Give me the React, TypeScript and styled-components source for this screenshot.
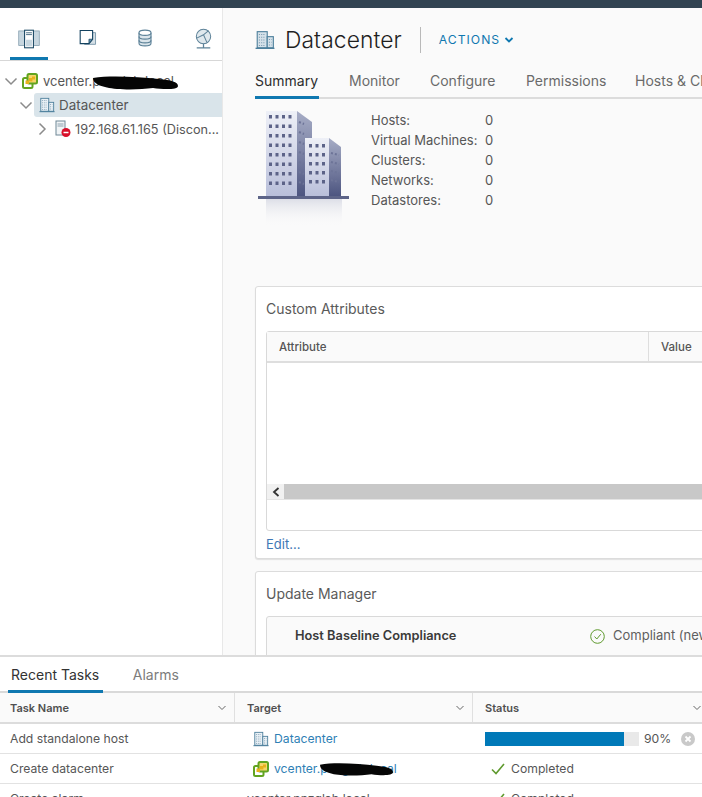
import React from "react";
import styled, { createGlobalStyle } from "styled-components";

const Global = createGlobalStyle`
  html, body { margin: 0; padding: 0; background: #fff; }
  body { font-family: Inter, "Noto Sans", "Liberation Sans", sans-serif; color: #565656; }
  * { box-sizing: border-box; }
`;

const Page = styled.div`
  width: 702px; height: 797px; display: flex; flex-direction: column; overflow: hidden;
`;
const TopBar = styled.div`height: 8px; flex: none; background: #314351;`;
const Middle = styled.div`height: 647px; flex: none; display: flex; overflow: hidden;`;
const Sidebar = styled.aside`
  width: 223px; flex: none; background: #fff; border-right: 1px solid #e8e8e8; padding-top: 16px;
`;
const SideTabs = styled.div`
  display: flex; height: 37px; border-bottom: 1px solid #d7d7d7; padding-left: 10px; gap: 20px;
`;
const SideTab = styled.div<{ $active?: boolean }>`
  width: 38px; height: 36px; display: flex; align-items: flex-start; justify-content: center; padding-top: 4px;
  border-bottom: ${p => (p.$active ? "3px solid #0f78b0" : "none")};
`;
const Tree = styled.div`padding-top: 8px; display: flex; flex-direction: column;`;
const TreeRow = styled.div<{ $indent: number }>`
  height: 24px; display: flex; align-items: center; position: relative; white-space: nowrap;
  font-size: 13px; color: #565656; margin-left: ${p => p.$indent}px;
`;
const TreeLabel = styled.div<{ $selected?: boolean; $pad: number; $size: number }>`
  flex: 1; height: 24px; display: flex; align-items: center; min-width: 0;
  font-size: ${p => p.$size}px; padding-left: ${p => p.$pad}px;
  background: ${p => (p.$selected ? "#d9e4ea" : "transparent")};
  border-radius: ${p => (p.$selected ? "3px 0 0 3px" : "0")};
`;
const TreeIconText = styled.span<{ $gap: number }>`margin-left: ${p => p.$gap}px;`;
const Twisty = styled.span`
  width: 16px; flex: none; display: flex; align-items: center; justify-content: center; color: #8b8b8b;
`;
const Scribble = styled.svg`position: absolute; pointer-events: none;`;

const Main = styled.main`
  flex: 1; min-width: 0; background: #fafafa; padding: 17px 0 0 32px; overflow: hidden;
`;
const Head = styled.div`display: flex; align-items: center; height: 30px; width: 500px;`;
const Title = styled.h1`
  margin: 0 0 0 10px; font-size: 22.800px; line-height: 30px; font-weight: 300; color: #1f1f1f; letter-spacing: 0.1px;
`;
const Sep = styled.div`width: 1px; height: 26px; background: #b9b9b9; margin: 0 18px 0 18px;`;
const Actions = styled.div`
  font-size: 12.2px; letter-spacing: 1px; color: #0f78b0; display: flex; align-items: center; gap: 4px; margin-top: -1px;
`;
const Tabs = styled.div`
  display: flex; height: 38px; margin-top: 6px; width: 560px; border-bottom: 2px solid #dcdcdc; white-space: nowrap;
`;
const Tab = styled.div<{ $active?: boolean; $w: number }>`
  width: ${p => p.$w}px; flex: none; height: 38px; padding-top: 11px; font-size: 14px; line-height: 18px;
  color: ${p => (p.$active ? "#2d2d2d" : "#6a6a6a")};
`;
const ActiveTab = styled(Tab)`
  border-bottom: 3px solid #0f78b0; margin-right: 30px;
`;
const Summary = styled.div`display: flex; height: 187px; padding-top: 10px;`;
const Art = styled.div`width: 116px; flex: none; padding-left: 3px;`;
const Stats = styled.div`display: flex; flex-direction: column; padding-top: 1px;`;
const Stat = styled.div`
  display: flex; height: 20px; align-items: center; font-size: 13px; color: #565656;
`;
const StatLabel = styled.span`width: 114px; flex: none;`;

const Card = styled.section`
  width: 560px; background: #fff; border: 1px solid #dcdcdc; border-radius: 3px; padding: 0 10px;
  box-shadow: 0 1px 1px #e0e0e0;
`;
const AttrCard = styled(Card)`height: 273px; margin-bottom: 12px;`;
const CardTitle = styled.h2`
  margin: 0; font-size: 14px; font-weight: 400; line-height: 18px; padding-top: 13px; height: 44px; color: #5a5a5a;
`;
const AttrTable = styled.div`
  height: 200px; border: 1px solid #d9d9d9; border-radius: 3px; display: flex; flex-direction: column;
`;
const AttrHead = styled.div`
  height: 31px; flex: none; background: #fafafa; border-bottom: 2px solid #dedede; display: flex;
`;
const AttrCell = styled.div<{ $w: number }>`
  width: ${p => p.$w}px; flex: none; font-size: 11.5px; font-weight: 500; color: #555; padding-left: 12px;
  display: flex; align-items: center; border-right: 1px solid #dedede;
`;
const AttrBody = styled.div`height: 121px; flex: none;`;
const Scrollbar = styled.div`
  height: 16px; flex: none; display: flex; background: #c8c8c8; border-bottom: 1px solid #e4e4e4;
`;
const ScrollBtn = styled.div`
  width: 17px; background: #f1f1f1; display: flex; align-items: center; justify-content: center; color: #333;
`;
const EditLink = styled.a`
  display: block; font-size: 13px; color: #3f78b5; padding-top: 5px; line-height: 16px;
`;
const ComplianceBox = styled.div`
  height: 60px; border: 1px solid #d9d9d9; border-radius: 3px 3px 0 0; background: #fafafa;
  display: flex; padding-top: 9px; font-size: 13px; white-space: nowrap;
`;
const ComplianceTitle = styled.div`
  width: 323px; flex: none; padding-left: 28px; margin-top: 1px; font-size: 12.800px; font-weight: 600; color: #3a3a3a; line-height: 18px;
`;
const ComplianceState = styled.div`
  display: flex; align-items: flex-start; gap: 8px; line-height: 18px; color: #5f5f5f;
`;

const Bottom = styled.footer`
  flex: 1; background: #fff; border-top: 2px solid #dcdcdc; position: relative; z-index: 1; overflow: hidden;
`;
const BottomTabs = styled.div`
  height: 36px; display: flex; padding-left: 8px; gap: 27px; border-bottom: 2px solid #d9d9d9;
`;
const BottomTab = styled.div<{ $active?: boolean }>`
  height: 36px; padding: 9px 3.500px 0 3px; font-size: 14px; line-height: 18px; white-space: nowrap;
  color: ${p => (p.$active ? "#333" : "#7c7c7c")};
  border-bottom: ${p => (p.$active ? "3px solid #0f78b0" : "none")};
`;
const GridRow = styled.div<{ $head?: boolean }>`
  display: grid; grid-template-columns: 235px 238px 229px; height: ${p => (p.$head ? "31px" : "30px")};
  background: ${p => (p.$head ? "#fafafa" : "#fff")};
  border-bottom: ${p => (p.$head ? "2px solid #dcdcdc" : "1px solid #e2e2e2")};
`;
const HeadCell = styled.div`
  display: flex; align-items: center; justify-content: space-between; padding: 0 7px 0 10px;
  font-size: 11px; font-weight: 600; color: #4f4f4f; border-right: 1px solid #e0e0e0;
  &:not(:first-child) { padding-left: 12px; }
  &:last-child { border-right: none; padding-right: 0; }
`;
const Cell = styled.div`
  display: flex; align-items: center; font-size: 12.2px; color: #565656; padding-left: 10px; white-space: nowrap; position: relative;
`;
const TargetCell = styled(Cell)`padding-left: 18px; gap: 5px; color: #2f7fb5;`;
const PlainTarget = styled(Cell)`padding-left: 12px;`;
const StatusCell = styled(Cell)`padding-left: 18px; gap: 6px;`;
const ProgressCell = styled(Cell)`padding-left: 12px;`;
const Track = styled.div`width: 154px; height: 14px; background: #e9e9e9; flex: none;`;
const Fill = styled.div`height: 100%; background: #0079b8;`;
const Pct = styled.span`margin-left: 5px; width: 37px; flex: none;`;

const Chevron = ({ down, size = 14, color = "#8b8b8b" }: { down?: boolean; size?: number; color?: string }) => (
  <svg width={size} height={size} viewBox="0 0 14 14" fill="none" stroke={color} strokeWidth="1.5">
    {down ? <path d="M1.5 4.5 7 10l5.5-5.5" /> : <path d="M4.5 1.5 10 7l-5.500 5.500" />}
  </svg>
);

const SmallChevron = ({ color = "#666", weight = 1 }: { color?: string; weight?: number }) => (
  <svg width="10" height="8" viewBox="0 0 10 8" fill="none" stroke={color} strokeWidth={weight}>
    <path d="M1.500 2l3.500 3.500L8.500 2" />
  </svg>
);

const VCenterIcon = ({ size = 16 }: { size?: number }) => (
  <svg width={size} height={size} viewBox="0 0 16 16" fill="none">
    <rect x="1" y="5" width="9.500" height="10" rx="1.500" stroke="#62a420" strokeWidth="2" fill="#fff" />
    <rect x="5.500" y="1" width="9.500" height="9.500" rx="1.500" stroke="#62a420" strokeWidth="2" fill="#f6d66a" />
    <rect x="7" y="5" width="3.400" height="3.400" fill="#e8b21c" />
    <rect x="3.500" y="7.500" width="3.500" height="3.500" fill="#e8b21c" />
    <rect x="10" y="3.500" width="3" height="3" fill="#e8b21c" />
  </svg>
);

const DatacenterIcon = ({ size = 16, fill = "#eaf1f6" }: { size?: number; fill?: string }) => (
  <svg width={size} height={size} viewBox="0 0 18 18" fill="none" stroke="#4d7f9c" strokeWidth="1">
    <rect x="2" y="1.500" width="9" height="14.500" fill={fill} />
    <rect x="11" y="6" width="5.500" height="10" fill={fill} />
    <path d="M0.500 16.500h17" strokeWidth="1.200" />
    <path d="M3.500 4h6M3.500 6.500h6M3.500 9h6M3.500 11.500h6M3.500 14h6M12.500 8.500h2.500M12.500 11h2.500M12.500 13.500h2.500" stroke="#7d9db2" strokeDasharray="1 1" />
  </svg>
);

const HostsIcon = () => (
  <svg width="22" height="20" viewBox="0 0 30 26" fill="none" style={{ marginTop: 1 }}>
    <rect x="1" y="2" width="8" height="20" fill="#c7d6df" stroke="#7f9aab" />
    <rect x="21" y="2" width="8" height="20" fill="#c7d6df" stroke="#7f9aab" />
    <rect x="9" y="1" width="12" height="24" fill="#fff" stroke="#13425f" strokeWidth="1.400" />
    <path d="M11 4.500h8M11 7h8" stroke="#13425f" />
    <rect x="11" y="14" width="8" height="9" fill="#c6d6df" />
  </svg>
);
const VmsIcon = () => (
  <svg width="19" height="19" viewBox="0 0 26 26" fill="none" style={{ marginTop: 1 }}>
    <path d="M9 5h15v16H9z" fill="#d5e0e6" stroke="#5e8198" />
    <path d="M3 2h17v12l-5 6H3z" fill="#fff" stroke="#13425f" strokeWidth="1.500" />
    <path d="M20 14l-5 6v-6z" fill="#5f8dab" stroke="#13425f" />
  </svg>
);
const StorageIcon = () => (
  <svg width="18" height="20" viewBox="0 0 24 26" fill="#dbe5eb" stroke="#5d8298" strokeWidth="1.500">
    <path d="M4 6v14c0 2 3.500 3.500 8 3.500s8-1.500 8-3.500V6" />
    <ellipse cx="12" cy="6" rx="8" ry="3.500" fill="#fff" />
    <path d="M4 11c0 2 3.500 3.500 8 3.500s8-1.500 8-3.500M4 16c0 2 3.500 3.500 8 3.500s8-1.500 8-3.500" fill="none" />
  </svg>
);
const NetworkIcon = () => (
  <svg width="21" height="22" viewBox="0 0 24 26" fill="none" stroke="#5d8298" strokeWidth="1.200">
    <circle cx="12" cy="10" r="8.500" fill="#dfe8ed" />
    <path d="M4 12l8-4 6-5M12 8l4 9" />
    <path d="M12 18.500V23M4 23.500h16" strokeWidth="1.500" />
  </svg>
);

const HostErrorIcon = () => (
  <svg width="18" height="18" viewBox="0 0 18 18" fill="none">
    <rect x="2" y="1" width="9" height="14" fill="#f1f4f6" stroke="#6f8796" />
    <path d="M3.500 4h6M3.500 6h6" stroke="#8ca1ae" />
    <circle cx="12" cy="12.500" r="4.500" fill="#d8102a" />
    <path d="M9.500 12.500h5" stroke="#fff" strokeWidth="1.500" />
  </svg>
);

const Towers = () => (
  <svg width="93" height="118" viewBox="0 0 93 118">
    <defs>
      <linearGradient id="fr" x1="0" y1="0" x2="0" y2="1">
        <stop offset="0" stopColor="#eef0f7" />
        <stop offset="1" stopColor="#b9bfda" />
      </linearGradient>
      <linearGradient id="sd" x1="0" y1="0" x2="0" y2="1">
        <stop offset="0" stopColor="#a7adc6" />
        <stop offset="1" stopColor="#4d5580" />
      </linearGradient>
      <linearGradient id="rf" x1="0" y1="0" x2="0" y2="1">
        <stop offset="0" stopColor="#b9bdd0" stopOpacity=".45" />
        <stop offset="1" stopColor="#fafafa" stopOpacity="0" />
      </linearGradient>
    </defs>
    <path d="M8 2h31v85H8z" fill="url(#fr)" />
    <path d="M39 2l15 11v74H39z" fill="url(#sd)" />
    <path d="M47 29h24v58H47z" fill="url(#fr)" />
    <path d="M71 29l12 9v49H71z" fill="url(#sd)" />
    {[0, 1, 2, 3, 4, 5, 6, 7].flatMap(r =>
      [0, 1, 2, 3].map(c => <rect key={`a${r}${c}`} x={11 + c * 6.500} y={6 + r * 9.500} width="3" height="3.500" fill="#5c6388" />)
    )}
    {[0, 1, 2, 3, 4].flatMap(r =>
      [0, 1, 2].map(c => <rect key={`b${r}${c}`} x={51 + c * 6.500} y={35 + r * 9} width="3" height="3.500" fill="#5c6388" />)
    )}
    {[0, 1, 2, 3, 4, 5, 6].map(r => <path key={r} d={`M41 ${13 + r * 10}l5 2`} stroke="#6d7498" strokeWidth="2" strokeDasharray="2 2" />)}
    {[0, 1, 2, 3].map(r => <path key={r} d={`M73 ${44 + r * 9}l8 2`} stroke="#6d7498" strokeWidth="2" strokeDasharray="2 2" />)}
    <rect x="0" y="87" width="91" height="3" fill="#5d6488" />
    <rect x="8" y="90" width="76" height="28" fill="url(#rf)" />
  </svg>
);

const Redact = ({ w, h, style }: { w: number; h: number; style: React.CSSProperties }) => (
  <Scribble width={w} height={h} viewBox="0 0 85 15" preserveAspectRatio="none" style={style}>
    <path
      d="M0 3C18 0 45 2 66 4C78 5 85 7 85 11C85 15 70 14.500 60 13C46 15 24 15 14 12.500C6 11 0 8 0 3Z"
      fill="#050505"
    />
  </Scribble>
);

const Check = () => (
  <svg width="14" height="12" viewBox="0 0 14 12" fill="none" stroke="#5f9a2e" strokeWidth="1.600">
    <path d="M1 6.500 5 10.500 13 1" />
  </svg>
);

export default function App() {
  return (
    <Page>
      <Global />
      <TopBar />
      <Middle>
        <Sidebar>
          <SideTabs>
            <SideTab $active><HostsIcon /></SideTab>
            <SideTab><VmsIcon /></SideTab>
            <SideTab><StorageIcon /></SideTab>
            <SideTab><NetworkIcon /></SideTab>
          </SideTabs>
          <Tree>
            <TreeRow $indent={3}>
              <Twisty><Chevron down /></Twisty>
              <TreeLabel $pad={3} $size={13}>
                <VCenterIcon />
                <TreeIconText $gap={5}>vcenter.pnzglab.local</TreeIconText>
              </TreeLabel>
              <Redact w={85} h={15} style={{ left: 90, top: 6 }} />
            </TreeRow>
            <TreeRow $indent={18}>
              <Twisty><Chevron down /></Twisty>
              <TreeLabel $selected $pad={5} $size={13.400}>
                <DatacenterIcon />
                <TreeIconText $gap={4}>Datacenter</TreeIconText>
              </TreeLabel>
            </TreeRow>
            <TreeRow $indent={34}>
              <Twisty><Chevron /></Twisty>
              <TreeLabel $pad={4} $size={12.700}>
                <HostErrorIcon />
                <TreeIconText $gap={3}>192.168.61.165 (Discon...</TreeIconText>
              </TreeLabel>
            </TreeRow>
          </Tree>
        </Sidebar>
        <Main>
          <Head>
            <DatacenterIcon size={20} fill="#d5e1e9" />
            <Title>Datacenter</Title>
            <Sep />
            <Actions>ACTIONS<SmallChevron color="#0f78b0" weight={1.800} /></Actions>
          </Head>
          <Tabs>
            <ActiveTab $active $w={64}>Summary</ActiveTab>
            <Tab $w={81}>Monitor</Tab>
            <Tab $w={96}>Configure</Tab>
            <Tab $w={109}>Permissions</Tab>
            <Tab $w={110}>Hosts &amp; Clusters</Tab>
          </Tabs>
          <Summary>
            <Art><Towers /></Art>
            <Stats>
              {["Hosts:", "Virtual Machines:", "Clusters:", "Networks:", "Datastores:"].map(l => (
                <Stat key={l}><StatLabel>{l}</StatLabel>0</Stat>
              ))}
            </Stats>
          </Summary>
          <AttrCard>
            <CardTitle>Custom Attributes</CardTitle>
            <AttrTable>
              <AttrHead>
                <AttrCell $w={382}>Attribute</AttrCell>
                <AttrCell $w={180}>Value</AttrCell>
              </AttrHead>
              <AttrBody />
              <Scrollbar>
                <ScrollBtn>
                  <svg width="8" height="10" viewBox="0 0 8 10" fill="none" stroke="#333" strokeWidth="1.800"><path d="M6.500 1 2 5l4.500 4" /></svg>
                </ScrollBtn>
              </Scrollbar>
            </AttrTable>
            <EditLink>Edit...</EditLink>
          </AttrCard>
          <Card>
            <CardTitle>Update Manager</CardTitle>
            <ComplianceBox>
              <ComplianceTitle>Host Baseline Compliance</ComplianceTitle>
              <ComplianceState>
                <svg width="15" height="15" viewBox="0 0 15 15" fill="none" stroke="#5f9a2e" style={{ marginTop: 3 }}>
                  <circle cx="7.500" cy="7.500" r="6.800" />
                  <path d="M4.500 7.500 6.800 10l4-4.800" />
                </svg>
                Compliant (new)
              </ComplianceState>
            </ComplianceBox>
          </Card>
        </Main>
      </Middle>
      <Bottom>
        <BottomTabs>
          <BottomTab $active>Recent Tasks</BottomTab>
          <BottomTab>Alarms</BottomTab>
        </BottomTabs>
        <GridRow $head>
          <HeadCell>Task Name<SmallChevron /></HeadCell>
          <HeadCell>Target<SmallChevron /></HeadCell>
          <HeadCell>Status<SmallChevron /></HeadCell>
        </GridRow>
        <GridRow>
          <Cell>Add standalone host</Cell>
          <TargetCell><DatacenterIcon /><span>Datacenter</span></TargetCell>
          <ProgressCell>
            <Track><Fill style={{ width: "90%" }} /></Track>
            <Pct>90%</Pct>
            <svg width="14" height="14" viewBox="0 0 14 14">
              <circle cx="7" cy="7" r="7" fill="#c9c9c9" />
              <path d="M4.500 4.500l5 5M9.500 4.500l-5 5" stroke="#fff" strokeWidth="1.800" />
            </svg>
          </ProgressCell>
        </GridRow>
        <GridRow>
          <Cell>Create datacenter</Cell>
          <TargetCell>
            <VCenterIcon />
            <span>vcenter.pnzglab.local</span>
            <Redact w={73} h={14} style={{ left: 85, top: 8 }} />
          </TargetCell>
          <StatusCell><Check />Completed</StatusCell>
        </GridRow>
        <GridRow>
          <Cell>Create alarm</Cell>
          <PlainTarget>vcenter.pnzglab.local</PlainTarget>
          <StatusCell><Check />Completed</StatusCell>
        </GridRow>
      </Bottom>
    </Page>
  );
}
